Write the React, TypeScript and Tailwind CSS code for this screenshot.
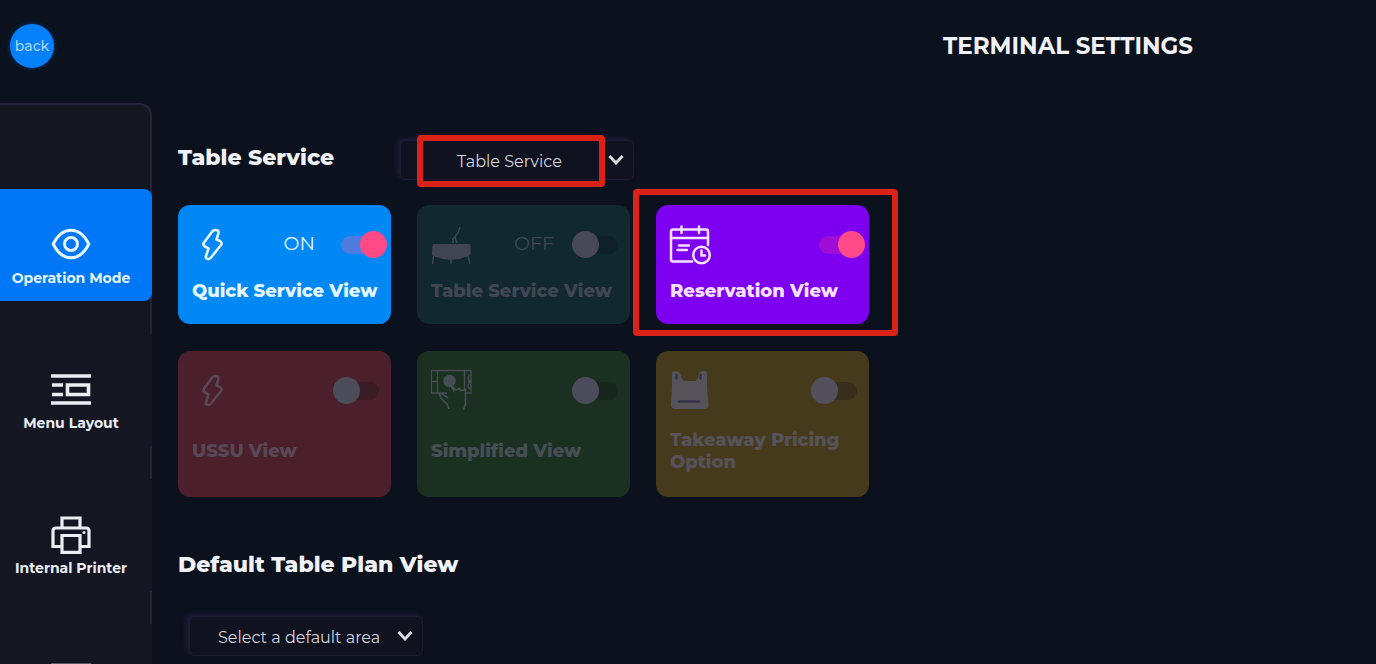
import { useState } from 'react';
import type { ReactNode } from 'react';

type View = {
  id: string;
  title: string;
  on: boolean;
  state?: string;
  icon: ReactNode;
  card: string;
  text: string;
  track: string;
  knob: string;
};

const BoltIcon = () => (
  <svg viewBox="0 0 40 40" className="w-10 h-10" fill="none" stroke="currentColor" strokeWidth="2.6" strokeLinejoin="round">
    <path d="M19.500 8.500 Q21 6 23.500 6 Q27 6 26.500 9 L24.500 15.500 L28 17 Q30.500 18.500 29 21 L19 33.500 Q17 36 14.500 34.500 Q13.500 33.500 14 32 L16.500 24.500 L13 22.500 Q10.500 21 12 18.500 Z" />
  </svg>
);

const TableIcon = () => (
  <svg viewBox="0 0 40 40" className="w-10 h-10" fill="none" stroke="currentColor">
    <path d="M2 20 H38 Q39.500 20 39.500 21.500 V30 Q39 32 36 32.500 Q28 36 20 36 Q12 36 4 32.500 Q1 32 0.800 30 L1.500 21.500 Q1.500 20 2 20 Z" fill="currentColor" stroke="none" />
    <path d="M22 19 V15 L27 9 L29 3 M24 13 L26 19 M2.500 32 L1.500 40 M20 36 V40 M37 32 L39 40" strokeWidth="1.4" />
  </svg>
);

const CalendarIcon = () => (
  <svg viewBox="0 0 40 40" className="w-10 h-10 overflow-visible" fill="none" stroke="currentColor" strokeWidth="2.500" strokeLinecap="round">
    <path d="M22 37.500 H3 Q1 37.500 1 35.500 V7.500 Q1 5.500 3 5.500 H36 Q38 5.500 38 7.500 V21" />
    <path d="M1 14 H38 M11.500 2.500 V9 M29 2.500 V9 M9 21.500 H19 M7.500 26 H17" />
    <circle cx="31.500" cy="31" r="8.300" />
    <path d="M31.500 26.500 V31.500 H35" />
  </svg>
);

const TouchIcon = () => (
  <svg viewBox="0 0 40 40" className="w-10 h-10 overflow-visible" fill="none" stroke="currentColor" strokeWidth="1.3">
    <path d="M16 23 H0.500 V0.500 H40 V23 H34 M6.500 0.500 V23 M33.500 0.500 V20 M0.500 11.500 H6.500 M40 11.500 H37 M38.500 5 L37 8 L38.500 11 M38.500 12 L37 16 L38.500 19" />
    <circle cx="18.500" cy="11" r="6.200" fill="currentColor" stroke="none" />
    <path d="M20 16 L22.500 20 V17.500 L25 20 L28 18.500 L30 20.500 L34.500 19.500 V34 L32.500 40 M8 23 L10 28 L16 34 L18 39 M10 23 L17 28" strokeWidth="1.6" />
  </svg>
);

const BagIcon = () => (
  <svg viewBox="0 0 40 40" className="w-10 h-10">
    <path d="M2 4 Q2 1 5.500 1 Q9.500 1 10.500 5 Q12 11 15.500 11 H24 Q27.500 11 28.500 5 Q29.500 1 33.500 1 Q37 1 37 4 V17 L38.500 35 Q38.500 39 34.500 39 H5 Q1 39 1 35 L2 17 Z" fill="currentColor" />
    <path d="M6.500 5 V8.500 M30.500 5 V8.500 M9 31.500 H29" stroke="#34344a" strokeWidth="2.400" strokeLinecap="round" />
  </svg>
);

const EyeIcon = () => (
  <svg viewBox="0 0 40 40" className="w-10 h-10" fill="none" stroke="currentColor" strokeWidth="3" strokeLinejoin="round">
    <path d="M2.200 20 Q9 6.200 20 6.200 Q31 6.200 37.800 20 Q31 33.800 20 33.800 Q9 33.800 2.200 20 Z" />
    <circle cx="20" cy="20" r="6.500" />
  </svg>
);

const MenuIcon = () => (
  <svg viewBox="0 0 40 40" className="w-10 h-10" fill="none" stroke="currentColor" strokeWidth="3">
    <path d="M0 7 H40 M0 34 H40 M1 16 H12 M1 25.500 H12" strokeWidth="3.400" />
    <path d="M16.500 16 H37.500 V25.500 H16.500 Z" strokeWidth="3.600" />
  </svg>
);

const PrinterIcon = () => (
  <svg viewBox="0 0 40 40" className="w-10 h-10" fill="none" stroke="currentColor" strokeWidth="3.200">
    <path d="M11 14 V4 H29 V14 M10 32.500 H2 V17 Q2 14 5 14 H35 Q38 14 38 17 V32.500 H30" />
    <path d="M11 21.500 H29 V38.400 H11 Z" />
    <circle cx="33" cy="18.500" r="1.500" fill="currentColor" stroke="none" />
  </svg>
);

const CardIcon = () => (
  <svg viewBox="0 0 40 40" className="w-10 h-10 text-[#9b9ca6]" fill="none" stroke="currentColor" strokeWidth="3">
    <path d="M1.500 6 H38.500 V34 H1.500 Z M1.500 15 H38.500" />
  </svg>
);

const navItems = [
  { id: 'operation', label: 'Operation Mode', icon: <EyeIcon /> },
  { id: 'menu', label: 'Menu Layout', icon: <MenuIcon /> },
  { id: 'printer', label: 'Internal Printer', icon: <PrinterIcon /> },
  { id: 'card', icon: <CardIcon /> },
];

const initialViews: View[] = [
  { id: 'quick', title: 'Quick Service View', on: true, state: 'ON', icon: <BoltIcon />, card: 'bg-[#0288f5]', text: 'text-[#e4f6ff]', track: 'bg-[#4f7ade]', knob: 'bg-[#ff4a87]' },
  { id: 'table', title: 'Table Service View', on: false, state: 'OFF', icon: <TableIcon />, card: 'bg-[#112830]', text: 'text-[#3f4652]', track: 'bg-[#0f2028]', knob: 'bg-[#484859]' },
  { id: 'reservation', title: 'Reservation View', on: true, icon: <CalendarIcon />, card: 'bg-[#7d00f0]', text: 'text-[#f6e2ff]', track: 'bg-[#a00cd8]', knob: 'bg-[#ff4a87]' },
  { id: 'ussu', title: 'USSU View', on: false, icon: <BoltIcon />, card: 'bg-[#4b1f2b]', text: 'text-[#584856]', track: 'bg-[#3b1b26]', knob: 'bg-[#4d4c5a]' },
  { id: 'simplified', title: 'Simplified View', on: false, icon: <TouchIcon />, card: 'bg-[#1b3021]', text: 'text-[#464e54]', track: 'bg-[#17271e]', knob: 'bg-[#4b4b5b]' },
  { id: 'takeaway', title: 'Takeaway Pricing Option', on: false, icon: <BagIcon />, card: 'bg-[#453a1c]', text: 'text-[#56525a]', track: 'bg-[#382f1b]', knob: 'bg-[#53505c]' },
];

const Dropdown = ({ label, options, pad }: { label: string; options: string[]; pad: string }) => (
  <div className="relative w-[234px]">
    <select
      aria-label={label}
      className={`w-full h-10 pt-[3px] appearance-none rounded-md border border-[#1d1b30] bg-[#10121f] text-base text-[#d3d4de] outline-none shadow-[-3px_-2px_5px_#211c38] ${pad}`}
    >
      {options.map((o) => (
        <option key={o}>{o}</option>
      ))}
    </select>
    <svg viewBox="0 0 16 10" className="absolute right-[10px] top-[15px] w-4 h-[10px] pointer-events-none" fill="none" stroke="#dcdde6" strokeWidth="2.800">
      <path d="M1.500 1 L8 8 L14.500 1" />
    </svg>
  </div>
);

const ViewCard = ({ view, onToggle }: { view: View; onToggle: () => void }) => (
  <div className={`h-full flex flex-col rounded-xl pl-[14px] pr-1 pt-[19px] pb-[6px] ${view.card} ${view.text}`}>
    <div className="flex items-center">
      {view.icon}
      {view.state && <span className="ml-auto text-[19px] leading-6">{view.on ? 'ON' : 'OFF'}</span>}
      <label className={`relative w-[54px] h-[27px] cursor-pointer ${view.state ? 'ml-[18px]' : 'ml-auto'}`}>
        <input type="checkbox" aria-label={view.title} checked={view.on} onChange={onToggle} className="peer sr-only" />
        <span className={`absolute left-2 top-[5px] w-[38px] h-[18px] rounded-full ${view.track}`}></span>
        <span className={`absolute left-0 top-0 size-[27px] rounded-full peer-checked:left-[27px] ${view.knob}`}></span>
      </label>
    </div>
    <div className="flex-1 flex items-center">
      <h3 className="text-lg leading-[22px] font-extrabold">{view.title}</h3>
    </div>
  </div>
);

const App = () => {
  const [active, setActive] = useState('operation');
  const [views, setViews] = useState(initialViews);

  const toggle = (id: string) => {
    setViews((prev) => prev.map((v) => (v.id === id ? { ...v, on: !v.on } : v)));
  };

  return (
    <div className="h-screen overflow-hidden flex flex-col bg-[#0b111d] text-[#f1f2f7] font-[Montserrat,Inter,sans-serif]">
      <header className="flex-shrink-0 h-[103px] flex items-start justify-between pl-[10px] pr-[183px] pt-6">
        <button className="size-11 rounded-full bg-[#0480f8] text-sm font-medium text-[#a9d6ff] shadow-[0_0_4px_#05408a]">back</button>
        <h1 className="text-[23px] leading-[44px] font-bold">TERMINAL SETTINGS</h1>
      </header>

      <div className="flex-1 min-h-0 flex items-start">
        <aside className="flex-shrink-0 w-[152px] rounded-tr-xl border-t-2 border-r-2 border-[#232239] bg-[#141622] pt-[84px]">
          <nav className="flex flex-col gap-[33px] -mr-[2px]">
            {navItems.map((item) => (
              <button
                key={item.id}
                onClick={() => setActive(item.id)}
                className={`h-28 flex flex-col items-center pt-[35px] pr-[10px] ${item.id === active ? 'rounded-r-lg bg-[#0077f6] text-[#e6f6ff]' : 'bg-[#141622] text-[#eceef6]'}`}
              >
                {item.icon}
                {item.label && <span className="mt-1 text-sm leading-5 font-bold whitespace-nowrap">{item.label}</span>}
              </button>
            ))}
          </nav>
        </aside>

        <main className="flex-1 pl-[26px] pt-[37px]">
          <div className="flex items-start">
            <h2 className="w-[222px] text-[22px] leading-9 font-extrabold">Table Service</h2>
            <div className="relative">
              <Dropdown label="Table Service" options={['Table Service', 'Quick Service']} pad="pl-14" />
              <div className="absolute left-[17px] -top-[5px] w-[188px] h-[52px] border-6 border-[#da2217] rounded-sm pointer-events-none"></div>
            </div>
          </div>

          <div className="mt-[25px] grid grid-cols-[repeat(3,213px)] grid-rows-[119px_146px] gap-x-[26px] gap-y-[27px]">
            {views.map((view) => (
              <div key={view.id} className="relative">
                <ViewCard view={view} onToggle={() => toggle(view.id)} />
                {view.id === 'reservation' && (
                  <div className="absolute -left-[23px] -top-4 w-[265px] h-[147px] border-6 border-[#da2217] rounded-sm pointer-events-none"></div>
                )}
              </div>
            ))}
          </div>

          <h2 className="mt-[50px] text-[22px] leading-9 font-extrabold">Default Table Plan View</h2>
          <div className="mt-[33px] ml-[11px]">
            <Dropdown label="Default Table Plan View" options={['Select a default area', 'Main Area']} pad="pl-7" />
          </div>
        </main>
      </div>
    </div>
  );
};

export default App;
